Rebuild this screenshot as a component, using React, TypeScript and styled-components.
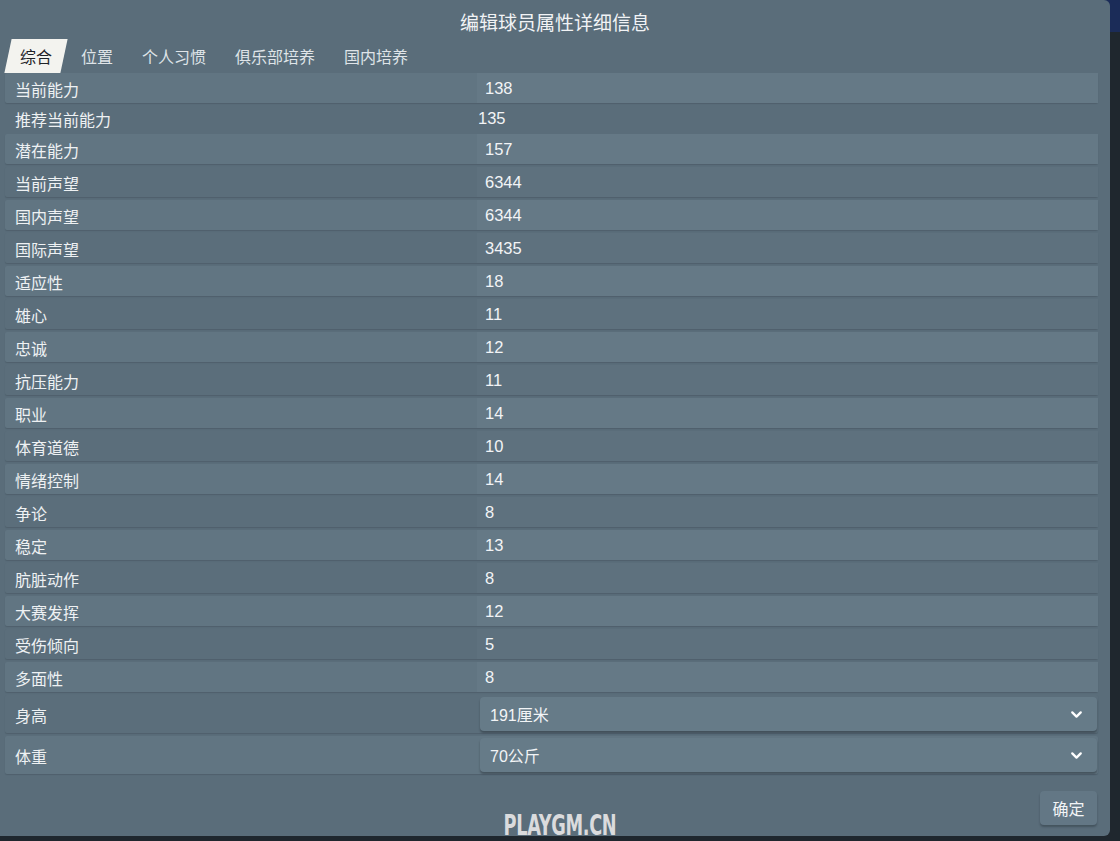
import React from 'react'
import styled, { createGlobalStyle } from 'styled-components'
import { ChevronDown } from 'lucide-react'

const Global = createGlobalStyle`
  html, body {
    margin: 0;
    padding: 0;
  }
  body {
    background: linear-gradient(to bottom, #1b2c58 0, #1b2c58 32px, #1f272e 32px);
    font-family: "Liberation Sans", "Noto Sans CJK SC", sans-serif;
    color: #eef1f3;
    width: 1120px;
    height: 841px;
    overflow: hidden;
  }
`

const Dialog = styled.div`
  position: relative;
  width: 1110px;
  height: 836px;
  background: #5a6d7a;
  border-radius: 0 6px 6px 0;
  display: flex;
  flex-direction: column;
  box-sizing: border-box;
`

const Title = styled.div`
  height: 39px;
  display: flex;
  align-items: center;
  justify-content: center;
  font-size: 19px;
  color: #f1f3f5;
  padding-top: 3px;
  box-sizing: border-box;
`

const Tabs = styled.div`
  height: 34px;
  display: flex;
  align-items: stretch;
  gap: 5px;
  padding-left: 8px;
`

const Tab = styled.div<{ $active?: boolean }>`
  position: relative;
  display: flex;
  align-items: center;
  padding: 0 12px;
  font-size: 16px;
  color: ${p => (p.$active ? '#1f2328' : '#dfe4e8')};
  &::before {
    content: '';
    position: absolute;
    inset: 0;
    background: ${p => (p.$active ? '#f3f3ef' : 'transparent')};
    transform: skewX(-12deg);
    z-index: 0;
  }
  span {
    position: relative;
    z-index: 1;
  }
`

const Rows = styled.div`
  display: flex;
  flex-direction: column;
  padding: 0 12px 0 5px;
`

const Row = styled.div<{ $light?: boolean; $plain?: boolean; $h?: number }>`
  display: grid;
  grid-template-columns: 472px 1fr;
  height: ${p => p.$h ?? 30}px;
  margin-top: ${p => (p.$plain ? 2 : 3)}px;
  &:first-child {
    margin-top: 0;
  }
  background: ${p => (p.$plain ? 'transparent' : p.$light ? '#617582' : '#5b6e7b')};
  box-shadow: ${p => (p.$plain ? 'none' : '0 1px 1px rgba(40, 52, 60, 0.22)')};
  border-radius: 2px;
`

const Label = styled.div`
  display: flex;
  align-items: center;
  padding: 1px 0 0 10px;
  font-size: 16px;
  color: #eef1f3;
`

const Value = styled.div<{ $light?: boolean; $plain?: boolean }>`
  display: flex;
  align-items: center;
  padding: 1px 0 0 ${p => (p.$plain ? 1 : 8)}px;
  font-size: 16.5px;
  color: #f2f4f6;
  background: ${p => (p.$plain ? 'transparent' : p.$light ? '#657986' : '#5e717e')};
`

const SelectCell = styled.div`
  display: flex;
  align-items: center;
  padding: 2px 1px 2px 3px;
`

const Select = styled.div`
  flex: 1;
  height: 34px;
  display: flex;
  align-items: center;
  justify-content: space-between;
  padding: 0 12px 0 10px;
  background: #667b88;
  border-radius: 4px;
  box-shadow: 0 2px 2px rgba(35, 45, 52, 0.45);
  font-size: 16px;
  color: #f2f4f6;
`

const Footer = styled.div`
  flex: 1;
  display: flex;
  align-items: flex-end;
  justify-content: flex-end;
  padding: 0 13px 11px 0;
`

const Button = styled.div`
  width: 57px;
  height: 34px;
  display: flex;
  align-items: center;
  justify-content: center;
  background: #637785;
  border-radius: 4px;
  box-shadow: 0 2px 2px rgba(35, 45, 52, 0.4);
  font-size: 16px;
  color: #f2f4f6;
`

const Watermark = styled.div`
  position: absolute;
  left: 440px;
  top: 807px;
  width: 240px;
  text-align: center;
  font-family: "DejaVu Sans Condensed", "Liberation Sans", sans-serif;
  font-weight: bold;
  font-size: 29px;
  line-height: 36px;
  color: #dadbdd;
  transform: scaleX(0.68);
  letter-spacing: -0.5px;
  white-space: nowrap;
`

const tabs = ['综合', '位置', '个人习惯', '俱乐部培养', '国内培养']

const stats: [string, string][] = [
  ['当前能力', '138'],
  ['推荐当前能力', '135'],
  ['潜在能力', '157'],
  ['当前声望', '6344'],
  ['国内声望', '6344'],
  ['国际声望', '3435'],
  ['适应性', '18'],
  ['雄心', '11'],
  ['忠诚', '12'],
  ['抗压能力', '11'],
  ['职业', '14'],
  ['体育道德', '10'],
  ['情绪控制', '14'],
  ['争论', '8'],
  ['稳定', '13'],
  ['肮脏动作', '8'],
  ['大赛发挥', '12'],
  ['受伤倾向', '5'],
  ['多面性', '8'],
]

const selects: [string, string][] = [
  ['身高', '191厘米'],
  ['体重', '70公斤'],
]

export default function App() {
  return (
    <>
      <Global />
      <Dialog>
        <Title>编辑球员属性详细信息</Title>
        <Tabs>
          {tabs.map((t, i) => (
            <Tab key={t} $active={i === 0}>
              <span>{t}</span>
            </Tab>
          ))}
        </Tabs>
        <Rows>
          {stats.map(([label, value], i) => {
            // 推荐当前能力 只是显示，没有底色
            const plain = i === 1
            const light = i % 2 === 0
            return (
              <Row key={label} $light={light} $plain={plain} $h={plain ? 26 : 30}>
                <Label>{label}</Label>
                <Value $light={light} $plain={plain}>{value}</Value>
              </Row>
            )
          })}
          {selects.map(([label, value], i) => (
            <Row key={label} $light={i === 1} $h={38}>
              <Label>{label}</Label>
              <SelectCell>
                <Select>
                  <span>{value}</span>
                  <ChevronDown size={17} strokeWidth={3.2} color="#ffffff" />
                </Select>
              </SelectCell>
            </Row>
          ))}
        </Rows>
        <Footer>
          <Button>确定</Button>
        </Footer>
        <Watermark>PLAYGM.CN</Watermark>
      </Dialog>
    </>
  )
}
